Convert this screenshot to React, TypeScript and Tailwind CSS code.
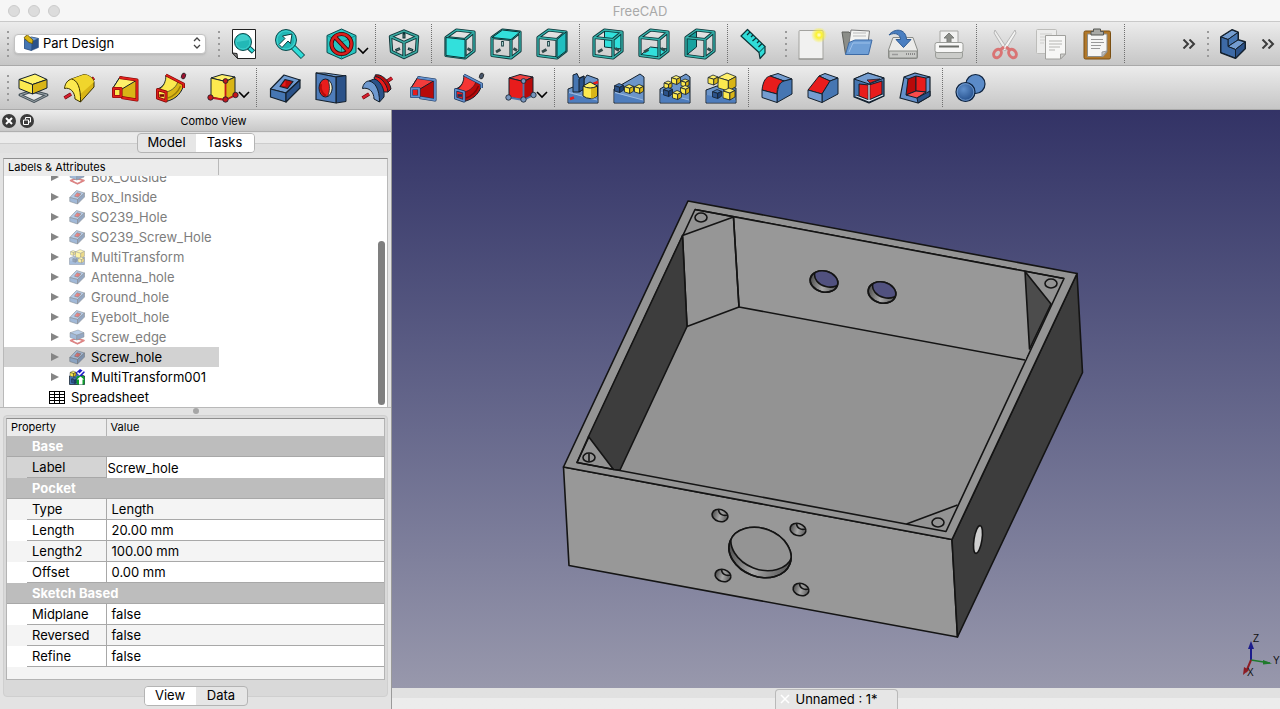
import { useState } from "react";
import type { ReactNode } from "react";

const BLUE = "#4676b2";
const BLUE_LIGHT = "#749dd0";
const BLUE_DARK = "#2b5289";
const YELLOW = "#fce94f";
const YELLOW_MID = "#f0d52c";
const YELLOW_DARK = "#d9b516";
const RED = "#e81c1c";
const RED_DARK = "#b80a0a";
const TEAL = "#2fdcd8";
const INK = "#14202c";

interface IconProps {
  size?: number;
}

function Icon({ size = 32, children }: { size?: number; children: ReactNode }) {
  return (
    <svg width={size} height={size} viewBox="0 0 32 32" fill="none" strokeLinejoin="round" aria-hidden="true">
      {children}
    </svg>
  );
}

// Outlined polygon, used by nearly every solid in the icon set
function Poly({ p, fill, stroke = INK, w = 1 }: { p: string; fill: string; stroke?: string; w?: number }) {
  return <polygon points={p} fill={fill} stroke={stroke} strokeWidth={w} />;
}

function MiniCube({ x, y, s, blue }: { x: number; y: number; s: number; blue?: boolean }) {
  const h = s / 2;
  const top = `${x - s},${y - h} ${x},${y - s} ${x + s},${y - h * 1.2} ${x + h * 0.3},${y - h * 0.3}`;
  const left = `${x - s},${y - h} ${x + h * 0.3},${y - h * 0.3} ${x + h * 0.3},${y + s} ${x - s},${y + h * 1.3}`;
  const right = `${x + h * 0.3},${y - h * 0.3} ${x + s},${y - h * 1.2} ${x + s},${y + h} ${x + h * 0.3},${y + s}`;
  return (
    <g>
      <Poly p={top} fill={blue ? BLUE : "#fff06a"} w={0.8} />
      <Poly p={left} fill={blue ? BLUE_DARK : YELLOW} w={0.8} />
      <Poly p={right} fill={blue ? "#1d4074" : YELLOW_DARK} w={0.8} />
    </g>
  );
}

/* ---- View icons ---- */

function FitAllIcon() {
  return (
    <Icon>
      <path d="M4.5 1.5H27.5V30.5H9.5L4.5 25Z" fill="#fff" stroke="#222" />
      <path d="M4.5 25L9.5 30.5L9 25.5Z" fill="#888" stroke="#222" />
      <path d="M19 18L25.5 24" stroke="#0b4a4c" strokeWidth="5" />
      <path d="M19 18L25 23.5" stroke={TEAL} strokeWidth="3" />
      <circle cx="15" cy="14" r="8.5" fill="#22b8b6" stroke="#0b4a4c" />
      <circle cx="15" cy="14" r="7" stroke="#3fd2cf" strokeWidth="1" />
      <path d="M9 14A6 6 0 0 1 21 12Z" fill="#56dcd9" opacity=".6" />
    </Icon>
  );
}

function FitSelectionIcon() {
  return (
    <Icon>
      <path d="M18 18L29 29" stroke="#0b4a4c" strokeWidth="6" />
      <path d="M18 18L28.5 28.5" stroke={TEAL} strokeWidth="4" />
      <circle cx="12" cy="12" r="10.5" fill="#22b8b6" stroke="#0b4a4c" />
      <circle cx="12" cy="12" r="9" stroke="#3fd2cf" strokeWidth="1.2" />
      <path d="M5 16.5L11 10.5L8.5 8L18 6L16.5 15.5L14 13L8 19.5Z" fill="#fff" stroke="#0b3b3c" />
    </Icon>
  );
}

function DrawStyleIcon() {
  return (
    <Icon>
      <Poly p="15.5,1 30,7.5 30,24.5 15.5,31 1,24.5 1,7.5" fill="#27c5c1" stroke="#0b4a4c" />
      <path d="M15.5 15V30M2 8L15 14M29 8L16 14" stroke="#12908e" />
      <circle cx="15.5" cy="16" r="10" stroke="#3a0505" strokeWidth="4.2" />
      <path d="M9 9L22 23" stroke="#3a0505" strokeWidth="4.4" />
      <circle cx="15.5" cy="16" r="10" stroke="#d8201e" strokeWidth="2.6" />
      <path d="M8.5 8.5L22.5 23.5" stroke="#d8201e" strokeWidth="2.6" />
    </Icon>
  );
}

function IsoIcon() {
  const d = "M16 3L29.5 8.5L28.5 23.5L16 29.5L3.5 23.5L2.5 8.5ZM2.5 8.5L16 14.5L29.5 8.5M16 14.5V29.5";
  return (
    <Icon>
      <path d={d} stroke="#0b3336" strokeWidth="3.4" />
      <path d={d} stroke="#3ba8a0" strokeWidth="1.6" />
      <path d="M16 5V10.5" stroke="#0b3336" strokeWidth="3" />
      <path d="M7.5 22.5L12 20.5M20 20.5L25 22.5" stroke="#0b3336" strokeWidth="2.8" />
      <path d="M16 6.5V9.5M8.5 22L11.5 20.8M21 20.8L24 22" stroke="#52706e" strokeWidth="1.3" />
    </Icon>
  );
}

type CubeFace = "front" | "top" | "right" | "rear" | "bottom" | "left";

const faces: Record<CubeFace, string> = {
  front: "2,9.5 21,11.5 21,30 2,27.5",
  top: "2,9.5 21,11.5 30,4 12.5,2",
  right: "21,11.5 30,4 30,23 21,30",
  rear: "12.5,2 30,4 30,21 12.5,19",
  bottom: "2,27.5 12.5,19 30,21 30,23 21,30",
  left: "2,9.5 12.5,2 12.5,19 2,27.5",
};

function ViewCubeIcon({ face }: { face: CubeFace }) {
  const frame = "M2 9.5L21 11.5L21 30L2 27.5ZM2 9.5L12.5 2L30 4L30 23L21 30M21 11.5L30 4";
  const hidden = face === "rear" || face === "bottom" || face === "left";
  return (
    <Icon>
      {hidden && <Poly p={faces[face]} fill={face === "left" ? "#17a29f" : "#32e0dc"} stroke="#0b3336" />}
      {!hidden && face !== "front" && (
        <g>
          <path d="M12.5 13V18.5" stroke="#0b3336" strokeWidth="2.6" />
          <path d="M12.5 14V17.5" stroke="#a9cfcd" strokeWidth="1" />
        </g>
      )}
      {face !== "front" && face !== "left" && <path d="M6 24L10.5 21.5" stroke="#31494a" strokeWidth="2.8" />}
      {face !== "right" && <path d="M23.5 20.5L27 22.5" stroke="#31494a" strokeWidth="2.8" />}
      <path d={frame} stroke="#0b3336" strokeWidth="3.2" />
      <path d={frame} stroke="#35b3ac" strokeWidth="1.4" />
      {!hidden && <Poly p={faces[face]} fill={face === "right" ? "#20bfc0" : "#32e0dc"} stroke="#0b3336" />}
    </Icon>
  );
}

function RulerIcon() {
  return (
    <Icon>
      <path d="M1 8L7.5 1.5L25 18.5V25L20 30.5L19 24.5Z" fill={TEAL} stroke="#0b3336" strokeWidth="1.2" />
      <path d="M19 24.5L25 18.5" stroke="#0b3336" />
      <path d="M10 4L7 7M13 7L11 9M16 10L12.5 13M19 13L17 15M22 15.5L18.5 19" stroke="#0b3336" strokeWidth="1.2" />
    </Icon>
  );
}

/* ---- File icons ---- */

function NewIcon() {
  return (
    <Icon>
      <defs>
        <radialGradient id="glow">
          <stop offset="0" stopColor="#fffde0" />
          <stop offset=".35" stopColor="#fbf230" />
          <stop offset="1" stopColor="#fbf230" stopOpacity="0" />
        </radialGradient>
      </defs>
      <rect x="4" y="2.5" width="24" height="28.5" rx="1" fill="#f1f1f0" stroke="#a3a39f" />
      <path d="M3.5 31H28.5" stroke="#8d8d89" />
      <circle cx="24" cy="7" r="8" fill="url(#glow)" />
    </Icon>
  );
}

function OpenIcon() {
  return (
    <Icon>
      <path d="M1 4H8L10 6V26H4.5Z" fill="#8b8d88" stroke="#5e605c" />
      <path d="M10 2L28.5 3L26 24L7 22Z" fill="#f4f4f2" stroke="#777" />
      <path d="M12 5H25M12 8H25" stroke="#bbb" />
      <path d="M8 14.5L14 12H31L27.5 26.5H4.5Z" fill="#6f9fd6" stroke="#3d6ba6" />
      <path d="M8 24L12 15H29" stroke="#9cc0ea" />
    </Icon>
  );
}

function SaveIcon() {
  return (
    <Icon>
      <path d="M6 9.5H26L30.5 22V29.5Q30.5 30.5 29.5 30.5H2.5Q1.5 30.5 1.5 29.5V22Z" fill="#ececea" stroke="#8a8c88" />
      <path d="M2 23H30V30H2Z" fill="#c9cac7" stroke="#8a8c88" />
      <path d="M19 26H28" stroke="#888" strokeWidth="2" strokeDasharray="1 1" />
      <path d="M5 26.5H11" stroke="#999" strokeWidth="1.5" />
      <path d="M2 7C7 0 19 0 19.5 11.5H24L16.5 19.5L9 11.5H13.5C13.5 6 8 4 2 7Z" fill="#4a7fc1" stroke="#2d5a93" />
    </Icon>
  );
}

function PrintIcon() {
  return (
    <Icon>
      <path d="M7 3H25V18H7Z" fill="#f2f2f1" stroke="#a6a6a3" />
      <path d="M16 5L21 10H18V15H14V10H11Z" fill="#8b8d88" stroke="#7b7d79" />
      <rect x="2" y="14.5" width="28" height="10" rx="2" fill="#f7f7f6" stroke="#9a9c98" />
      <path d="M6 18.5H26" stroke="#6b6d69" strokeWidth="2" />
      <path d="M2.5 24.5H29.5V28Q29.5 30.5 27 30.5H5Q2.5 30.5 2.5 28Z" fill="#cbccc9" stroke="#9a9c98" />
    </Icon>
  );
}

function CutIcon() {
  return (
    <Icon>
      <path d="M6 2L18.5 21L16 23L5 5Z" fill="#ededec" stroke="#aaa" strokeWidth=".8" />
      <path d="M26 2L13.5 21L16 23L27 5Z" fill="#f5f5f4" stroke="#aaa" strokeWidth=".8" />
      <ellipse cx="8.5" cy="25.5" rx="3.5" ry="4.5" transform="rotate(35 8.5 25.5)" stroke="#d97474" strokeWidth="3" />
      <ellipse cx="23.5" cy="25.5" rx="3.5" ry="4.5" transform="rotate(-35 23.5 25.5)" stroke="#d97474" strokeWidth="3" />
      <path d="M11 22L15 19M21 22L17 19" stroke="#d97474" strokeWidth="3" />
    </Icon>
  );
}

function CopyIcon() {
  return (
    <Icon>
      <rect x="1.5" y="1.5" width="20" height="24" rx="1" fill="#ececeb" stroke="#bdbdba" />
      <path d="M5 6H17M5 9H17M5 12H12M5 15H9" stroke="#cfcfcd" />
      <path d="M10.5 7.5H30.5V26L25.5 31H10.5Z" fill="#f7f7f6" stroke="#a0a09d" />
      <path d="M14 13H27M14 16H27M14 19H25M14 22H20" stroke="#b5b5b2" />
      <path d="M25.5 31V26H30.5Z" fill="#cfcfcd" stroke="#a0a09d" />
    </Icon>
  );
}

function PasteIcon() {
  return (
    <Icon>
      <rect x="3" y="3" width="26.5" height="28" rx="1.5" fill="#b1782a" stroke="#7a4f13" />
      <path d="M6.5 6H26V24L22 28.5H6.5Z" fill="#f6f6f5" stroke="#8c8c88" />
      <path d="M10 11.5H22M10 14.5H23M10 17.5H20M10 20.5H19" stroke="#999" />
      <path d="M21 28.5L26 23L21 24Z" fill="#c5c5c2" stroke="#999" />
      <path d="M10 3.5H12.5V1H19.5V3.5H22.5V7H10Z" fill="#a9aaa6" stroke="#555753" />
    </Icon>
  );
}

function PartIcon() {
  return (
    <Icon>
      <Poly p="4,9 15,2 21,4.5 21,12 28,14 28,20.5 18.5,30 4,24.5" fill={BLUE_DARK} w={2} />
      <Poly p="4,9 15,2 21,4.5 11,11.5" fill={BLUE_LIGHT} />
      <Poly p="11,11.5 21,4.5 21,12 11,18.5" fill={BLUE} />
      <Poly p="11,18.5 21,12 28,14 18.5,21.5" fill={BLUE_LIGHT} />
      <Poly p="4,9 11,11.5 11,18.5 18.5,21.5 18.5,30 4,24.5" fill="#3d6aa6" />
      <Poly p="18.5,21.5 28,14 28,20.5 18.5,30" fill={BLUE_DARK} />
    </Icon>
  );
}

/* ---- Part Design icons ---- */

function PadIcon({ size, blue }: IconProps & { blue?: boolean }) {
  return (
    <Icon size={size}>
      <path d="M3 23L15 19L30 23L17 29.5Z" fill={blue ? "#fff" : "#e4e6e6"} stroke={blue ? "#a40000" : "#46525a"} strokeWidth="3" />
      <path d="M3 23L15 19L30 23L17 29.5Z" stroke={blue ? RED : "#9aa4a8"} strokeWidth="1" />
      <Poly p="2,7.5 18,2 30,7.5 15.5,12.5" fill={blue ? BLUE_LIGHT : "#fff36c"} />
      <Poly p="2,7.5 15.5,12.5 15.5,22 2,16.5" fill={blue ? BLUE : YELLOW} />
      <Poly p="15.5,12.5 30,7.5 30,16 15.5,22" fill={blue ? BLUE_DARK : YELLOW_DARK} />
    </Icon>
  );
}

function RevolutionIcon() {
  return (
    <Icon>
      <path d="M1.5 26L8 22M26 9.5L31 6" stroke="#5c0606" strokeWidth="3.6" />
      <path d="M1.5 26L8 22M26 9.5L31 6" stroke="#d51f2e" strokeWidth="2.5" />
      <path d="M8.5 7L21 2.5C26 3 30 6 31 10V15L17.5 30Z" fill={YELLOW_DARK} stroke="#3b3203" />
      <path d="M8.5 7L21 2.5C26 3 30 6 31 10L17.5 22C16 13 13 9 8.5 7Z" fill={YELLOW_MID} />
      <path d="M1.5 16.5C2 11 5 8 8.5 7C14 8 18 15 17.5 30L12 27C12 20 7 15 1.5 16.5Z" fill={YELLOW} stroke="#3b3203" />
    </Icon>
  );
}

function LoftIcon({ cut }: { cut?: boolean }) {
  const frame = cut ? "#6591cd" : "#e0201c";
  const edge = cut ? "#173459" : "#7a0505";
  return (
    <Icon>
      <Poly p="11,5 28,8 28,28 12,25 4,24 4,16" fill={cut ? RED_DARK : YELLOW_DARK} />
      <Poly p="11,5 28,8 13,17 4,16" fill={cut ? "#f23c3c" : "#fff06a"} />
      <path d="M10.5 5.5L28 8V28L12.5 25.5" stroke={edge} strokeWidth="3" />
      <path d="M10.5 5.5L28 8V28L12.5 25.5" stroke={frame} strokeWidth="1.8" />
      <rect x="4.5" y="16.5" width="7.5" height="8" fill={cut ? RED : YELLOW} stroke={edge} strokeWidth="3" />
      <rect x="4.5" y="16.5" width="7.5" height="8" stroke={frame} strokeWidth="1.8" />
    </Icon>
  );
}

function SweepIcon({ cut }: { cut?: boolean }) {
  const frame = cut ? "#6591cd" : "#e0201c";
  const edge = cut ? "#173459" : "#7a0505";
  return (
    <Icon>
      <path d="M11 3L29 12C27 20 22 27 11 29.5L3 17C9 14 11 10 11 3Z" fill={cut ? RED_DARK : YELLOW_DARK} stroke={INK} />
      <path d="M11 3L23 9C22 14 17 19 11 20L4 18C9 14 11 10 11 3Z" fill={cut ? "#f53434" : YELLOW} stroke={INK} strokeWidth=".6" />
      <path d="M13 26C19 24 23 20 25.500 14" stroke={cut ? "#7c0606" : "#9a7d08"} strokeWidth="1.5" />
      <path d="M11 3L28.5 12V16" stroke={edge} strokeWidth="3" />
      <path d="M11 3L28.5 12V16" stroke={frame} strokeWidth="1.7" />
      <path d="M2.5 17.5L11 20V29L2.5 26Z" fill={cut ? RED : YELLOW} stroke={edge} strokeWidth="3" />
      <path d="M2.5 17.5L11 20V29L2.5 26Z" stroke={frame} strokeWidth="1.7" />
      <path d="M4.5 23.5H9" stroke={edge} strokeWidth="2.6" />
      <ellipse cx="28.5" cy="4" rx="2" ry="3" transform="rotate(20 28.5 4)" fill={cut ? "#46566b" : "#9b1230"} stroke="#222" strokeWidth=".8" />
    </Icon>
  );
}

function PrimitiveIcon({ cut }: { cut?: boolean }) {
  const dot = cut ? "#7795bd" : "#c4161c";
  const line = cut ? "#4e75ab" : "#c4161c";
  return (
    <Icon>
      <Poly p="4,6 15,2.5 28,5 18.5,9.5" fill={cut ? "#f04040" : "#fff06a"} />
      <Poly p="4,6 18.5,9.5 18.5,28 4,25" fill={cut ? RED : YELLOW} />
      <Poly p="18.5,9.5 28,5 28,23 18.5,28" fill={cut ? RED_DARK : YELLOW_DARK} />
      <path d="M18.5 9.5V28M3.5 25.5L18.5 28L29 23" stroke={line} strokeWidth="1.8" />
      <g fill={dot} stroke={INK} strokeWidth=".8">
        <circle cx="18.5" cy="9" r="2.4" />
        <circle cx="3.5" cy="25.5" r="2.7" />
        <circle cx="18.5" cy="27.5" r="2.7" />
        <circle cx="28.5" cy="23" r="2.7" />
      </g>
    </Icon>
  );
}

function PocketIcon({ size }: IconProps) {
  return (
    <Icon size={size}>
      <Poly p="1.5,17 15,3 31,8 17,21" fill="#6f9ad0" w={1.2} />
      <Poly p="1.5,17 17,21 17,30 1.5,25" fill={BLUE} w={1.2} />
      <Poly p="17,21 31,8 31,16 17,30" fill={BLUE_DARK} w={1.2} />
      <Poly p="11,14.5 16,7.5 24,9.5 18.5,16.5" fill={RED_DARK} w={1.2} />
      <path d="M12.5 13.5L16.5 8.5V14Z" fill={RED} />
    </Icon>
  );
}

function HoleIcon() {
  return (
    <Icon>
      <Poly p="1,1 21,5 31,4 10,1" fill={BLUE_LIGHT} />
      <Poly p="21,5 31,3.5 31,29.5 21,31" fill={BLUE_DARK} />
      <Poly p="1,1 21,5 21,31 1,27.5" fill="#4f7dba" w={1.2} />
      <ellipse cx="10.5" cy="16" rx="6.5" ry="9" fill={RED} stroke={INK} />
      <path d="M13 8C19 11 18 22 12.5 24.5C15 20 15 13 13 8Z" fill="#f4ecc8" stroke={INK} strokeWidth=".8" />
      <path d="M6 12C5 17 7 22 11 24" stroke={RED_DARK} strokeWidth="2" />
    </Icon>
  );
}

function GrooveIcon() {
  return (
    <Icon>
      <path d="M1.5 26L8 22M26 9.5L31 6" stroke="#5c0606" strokeWidth="3.6" />
      <path d="M1.5 26L8 22M26 9.5L31 6" stroke="#d51f2e" strokeWidth="2.5" />
      <path d="M14 3C20 1 29 9 30 17L27 20L20 16Z" fill={RED_DARK} stroke={INK} />
      <path d="M13 5C17 3 26 10 27 20L19 20Z" fill={RED} stroke={INK} />
      <path d="M8 9L13 7C19 8 24 17 23 25L18.5 30Z" fill={BLUE_DARK} stroke={INK} />
      <path d="M1.5 16.5C2 12 5 9 8 9C14 10 18.5 17 18.5 30L13 27C13 20 8 15 1.5 16.5Z" fill="#6f9ad0" stroke={INK} />
    </Icon>
  );
}

function Ground({ fold }: { fold?: boolean }) {
  return (
    <g>
      <Poly p={fold ? "1,17 14,12 20,3 31,7 31,31 1,31" : "1,17 27,2 31,5 31,31 1,31"} fill="#6c95ca" />
      <path d="M1.5 21L30.5 28V30.5H1.5Z" fill="#4e7dbd" />
      <path d="M2 20.5L30 28" stroke="#a9c5e8" strokeWidth=".8" />
    </g>
  );
}

function MirroredIcon() {
  return (
    <Icon>
      <Ground fold />
      <path d="M3 27L7 25.5M26 12L31 10" stroke={RED} strokeWidth="2.5" />
      <path d="M6 3L10 1.5L12 6L17 4V17L12 20H6Z" fill={BLUE} stroke={INK} />
      <path d="M12 7L17 4V17L12 20Z" fill={BLUE_DARK} stroke={INK} />
      <path d="M16 14V24Q23 29 30.5 24V14Z" fill={YELLOW} stroke={INK} />
      <path d="M24 15H30V24Q27 26 24 26.5Z" fill={YELLOW_DARK} />
      <path d="M16 14L23 10L30.5 14Q23 18 16 14Z" fill="#fff06a" stroke={INK} />
    </Icon>
  );
}

function LinearPatternIcon() {
  return (
    <Icon>
      <Ground />
      <MiniCube x={6} y={16} s={4.5} blue />
      <MiniCube x={16} y={17} s={4.5} />
      <MiniCube x={26} y={17} s={4.5} />
    </Icon>
  );
}

function PolarPatternIcon() {
  return (
    <Icon>
      <Ground />
      <MiniCube x={17} y={8} s={4.5} />
      <MiniCube x={9} y={13} s={4} />
      <MiniCube x={26} y={11} s={4} />
      <MiniCube x={26} y={18} s={4.5} />
      <MiniCube x={9} y={20} s={4.5} blue />
      <MiniCube x={18} y={23} s={4.5} />
    </Icon>
  );
}

function MultiTransformIcon({ size }: IconProps) {
  return (
    <Icon size={size}>
      <Poly p="1,18 12,14 31,16 31,31 1,31" fill="#6c95ca" />
      <path d="M1.5 23L30.5 28V30.5H1.5Z" fill="#4e7dbd" />
      <MiniCube x={22} y={10} s={9} />
      <MiniCube x={8} y={8} s={5} />
      <MiniCube x={12} y={22} s={4.5} blue />
      <MiniCube x={24} y={22} s={6} />
    </Icon>
  );
}

function FilletIcon() {
  return (
    <Icon>
      <Poly p="9,4 17,1.5 31,7 23,9" fill={BLUE_LIGHT} />
      <path d="M1 18C2 9 5 5 9 4L23 9C18 11 16 15 16 22Z" fill={RED} stroke={INK} />
      <path d="M23 9C18 11 16 15 16 30.5L31 22V7Z" fill={BLUE} stroke={INK} />
      <Poly p="1,18 16,22 16,30.5 1,25.5" fill={BLUE_LIGHT} />
    </Icon>
  );
}

function ChamferIcon() {
  return (
    <Icon>
      <Poly p="12,4 18,1.5 31,6 23,9" fill={BLUE_LIGHT} />
      <Poly p="1,18 12,4 23,9 15,22" fill={RED} />
      <Poly p="15,22 23,9 31,6 31,22 15,30.5" fill={BLUE} />
      <Poly p="1,18 15,22 15,30.5 1,25.5" fill={BLUE_LIGHT} />
    </Icon>
  );
}

function DraftIcon() {
  return (
    <Icon>
      <Poly p="1,7 15,1 31,6 31,24 16,31 1,25" fill={BLUE} w={1.2} />
      <Poly p="1,7 15,1 31,6 16,12" fill={BLUE_LIGHT} />
      <Poly p="6,12 16,13 16,28 6,24" fill={RED} />
      <Poly p="16,13 29,9 29,22 16,28" fill={RED} />
      <Poly p="14,8 27,7 17,11" fill={RED} w={0.8} />
      <path d="M16 13V30M3 24L16 29.5L30 23" stroke={INK} strokeWidth="2.6" />
      <path d="M16 13V29M3 24L16 29L30 23" stroke="#dce6f2" strokeWidth="1.3" />
    </Icon>
  );
}

function ThicknessIcon() {
  return (
    <Icon>
      <Poly p="5,5 16,1 31,5 31,24 19,31 1,26" fill="#6490cb" w={1.2} />
      <Poly p="9,7 17,4 17,19 7,23" fill={RED_DARK} />
      <Poly p="17,4 27,6 27,20 17,19" fill={RED} />
      <Poly p="7,23 17,19 27,20 18,26" fill="#fa4b4b" />
      <Poly p="18,26 31,19 31,24 19,31" fill={BLUE_DARK} />
      <path d="M27 6L31 5M5 5L9 7" stroke={INK} />
    </Icon>
  );
}

function BooleanIcon() {
  return (
    <Icon>
      <defs>
        <radialGradient id="ball" cx=".4" cy=".35" r=".7">
          <stop offset="0" stopColor="#5f8fcb" />
          <stop offset="1" stopColor="#204a86" />
        </radialGradient>
      </defs>
      <circle cx="20.5" cy="12" r="9.5" fill="#5b8bc8" stroke="#0f2440" strokeWidth="1.2" />
      <circle cx="10.5" cy="20" r="9.5" fill="url(#ball)" stroke="#0f2440" strokeWidth="1.2" />
      <circle cx="10.5" cy="20" r="8.3" stroke="#7ba3d6" strokeWidth=".8" />
    </Icon>
  );
}

function WorkbenchIcon() {
  return (
    <Icon size={16}>
      <Poly p="3,9 16,4 31,7 31,25 17,31 3,27" fill={BLUE_DARK} stroke="#2b4d7c" />
      <Poly p="3,9 17,4 31,7 18,13" fill={BLUE_LIGHT} stroke="#2b4d7c" />
      <Poly p="3,9 18,13 17,31 3,27" fill={BLUE} stroke="#2b4d7c" />
      <path d="M4 3L9 0L20 10L19 17L12 15L2 6Z" fill={YELLOW_DARK} stroke="#5a4a04" strokeWidth="1.5" />
    </Icon>
  );
}

function ActiveTransformIcon() {
  return (
    <Icon size={16}>
      <Poly p="1,14 12,8 31,14 31,31 1,31" fill="#4676b5" w={1.5} />
      <MiniCube x={8} y={10} s={6} />
      <MiniCube x={11} y={23} s={6} blue />
      <rect x="15" y="14" width="16" height="17" rx="3" fill="#0ea02c" />
      <path d="M23 15L30 21H27V31H20V21H16Z" fill="#fff" />
      <path d="M22 0L32 6L24 15L13 8Z" fill="#1a1ac8" />
      <path d="M17 7L21 11L29 3" stroke="#fff" strokeWidth="3" />
    </Icon>
  );
}

function SpreadsheetIcon() {
  return (
    <svg width="16" height="14" viewBox="0 0 16 14" fill="none" shapeRendering="crispEdges" aria-hidden="true">
      <path d="M.5 1.5H15.5V13.5H.5ZM0 4.5H16M0 7.5H16M0 10.5H16M5.5 1V14M10.5 1V14" stroke="#000" />
    </svg>
  );
}

/* ---- Toolbar parts ---- */

function Handle() {
  return (
    <div className="flex w-[9px] shrink-0 flex-col items-end justify-center gap-1 pr-px">
      {[0, 1, 2, 3, 4].map((i) => (
        <span key={i} className="size-0.5 bg-[#9a9a9a]" />
      ))}
    </div>
  );
}

function Separator() {
  return (
    <div className="flex w-2.5 shrink-0 py-0.5 pl-1">
      <span className="border-l border-dotted border-[#6f6f6f]" />
    </div>
  );
}

function ToolButton({ label, menu, children }: { label: string; menu?: boolean; children: ReactNode }) {
  return (
    <button
      type="button"
      aria-label={label}
      title={label}
      className={`relative flex shrink-0 items-center justify-center ${menu ? "w-[58px]" : "w-[46px]"}`}
    >
      {children}
      {menu && (
        <svg width="12" height="8" viewBox="0 0 12 8" fill="none" className="absolute right-0.5 bottom-2.5" aria-hidden="true">
          <path d="M1 1L6 6L11 1" stroke="#000" strokeWidth="1.6" />
        </svg>
      )}
    </button>
  );
}

function MoreButton({ label }: { label: string }) {
  return (
    <button type="button" aria-label={label} className="flex w-6 shrink-0 items-center justify-center">
      <svg width="14" height="10" viewBox="0 0 14 10" fill="none" aria-hidden="true">
        <path d="M1.5 .5L6 5L1.5 9.5M7.500 .5L12 5L7.5 9.5" stroke="#3c3c3c" strokeWidth="2" />
      </svg>
    </button>
  );
}

const toolbarClass = "flex h-11 shrink-0 border-b border-[#a9a9a9] bg-linear-to-b from-[#ececec] to-[#c6c6c6] pl-px";

function MainToolbar() {
  return (
    <div className={toolbarClass} role="toolbar" aria-label="Main">
      <Handle />
      <div className="mr-1.5 ml-1 flex h-5 w-48 shrink-0 items-center gap-1 self-center rounded border border-[#c2c2c2] bg-white px-2 pb-0.5 shadow-sm">
        <WorkbenchIcon />
        <select aria-label="Workbench" className="min-w-0 flex-1 appearance-none bg-transparent text-[13px] leading-4 outline-none">
          <option>Part Design</option>
        </select>
        <svg width="8" height="12" viewBox="0 0 8 12" fill="none" aria-hidden="true" className="-mr-1">
          <path d="M1 4L4 1L7 4M1 8L4 11L7 8" stroke="#444" strokeWidth="1.3" />
        </svg>
      </div>
      <Handle />
      <ToolButton label="Fit all"><FitAllIcon /></ToolButton>
      <ToolButton label="Fit selection"><FitSelectionIcon /></ToolButton>
      <ToolButton label="Draw style" menu><DrawStyleIcon /></ToolButton>
      <Separator />
      <ToolButton label="Axonometric"><IsoIcon /></ToolButton>
      <Separator />
      <ToolButton label="Front"><ViewCubeIcon face="front" /></ToolButton>
      <ToolButton label="Top"><ViewCubeIcon face="top" /></ToolButton>
      <ToolButton label="Right"><ViewCubeIcon face="right" /></ToolButton>
      <Separator />
      <ToolButton label="Rear"><ViewCubeIcon face="rear" /></ToolButton>
      <ToolButton label="Bottom"><ViewCubeIcon face="bottom" /></ToolButton>
      <ToolButton label="Left"><ViewCubeIcon face="left" /></ToolButton>
      <Separator />
      <ToolButton label="Measure distance"><RulerIcon /></ToolButton>
      <Handle />
      <ToolButton label="New"><NewIcon /></ToolButton>
      <ToolButton label="Open"><OpenIcon /></ToolButton>
      <ToolButton label="Save"><SaveIcon /></ToolButton>
      <ToolButton label="Print"><PrintIcon /></ToolButton>
      <Separator />
      <ToolButton label="Cut"><CutIcon /></ToolButton>
      <ToolButton label="Copy"><CopyIcon /></ToolButton>
      <ToolButton label="Paste"><PasteIcon /></ToolButton>
      <Separator />
      <div className="ml-auto flex">
        <MoreButton label="More file tools" />
        <Handle />
        <ToolButton label="Part"><PartIcon /></ToolButton>
        <MoreButton label="More part tools" />
      </div>
    </div>
  );
}

function PartDesignToolbar() {
  return (
    <div className={toolbarClass} role="toolbar" aria-label="Part design">
      <Handle />
      <ToolButton label="Pad"><PadIcon /></ToolButton>
      <ToolButton label="Revolution"><RevolutionIcon /></ToolButton>
      <ToolButton label="Additive loft"><LoftIcon /></ToolButton>
      <ToolButton label="Additive pipe"><SweepIcon /></ToolButton>
      <ToolButton label="Additive primitive" menu><PrimitiveIcon /></ToolButton>
      <Separator />
      <ToolButton label="Pocket"><PocketIcon /></ToolButton>
      <ToolButton label="Hole"><HoleIcon /></ToolButton>
      <ToolButton label="Groove"><GrooveIcon /></ToolButton>
      <ToolButton label="Subtractive loft"><LoftIcon cut /></ToolButton>
      <ToolButton label="Subtractive pipe"><SweepIcon cut /></ToolButton>
      <ToolButton label="Subtractive primitive" menu><PrimitiveIcon cut /></ToolButton>
      <Separator />
      <ToolButton label="Mirrored"><MirroredIcon /></ToolButton>
      <ToolButton label="Linear pattern"><LinearPatternIcon /></ToolButton>
      <ToolButton label="Polar pattern"><PolarPatternIcon /></ToolButton>
      <ToolButton label="MultiTransform"><MultiTransformIcon /></ToolButton>
      <Separator />
      <ToolButton label="Fillet"><FilletIcon /></ToolButton>
      <ToolButton label="Chamfer"><ChamferIcon /></ToolButton>
      <ToolButton label="Draft"><DraftIcon /></ToolButton>
      <ToolButton label="Thickness"><ThicknessIcon /></ToolButton>
      <Separator />
      <ToolButton label="Boolean"><BooleanIcon /></ToolButton>
    </div>
  );
}

/* ---- Combo view ---- */

interface TabsProps {
  names: [string, string];
  active: string;
  onChange: (name: string) => void;
  tabClass: string;
}

function SegmentedTabs({ names, active, onChange, tabClass }: TabsProps) {
  return (
    <div role="tablist" className="flex h-5 overflow-hidden rounded border border-[#b4b4b4] bg-[#e6e6e6] text-[13px] leading-4">
      {names.map((name) => (
        <button
          key={name}
          type="button"
          role="tab"
          aria-selected={active === name}
          onClick={() => onChange(name)}
          className={`pb-0.5 ${tabClass} ${active === name ? "bg-white" : ""}`}
        >
          {name}
        </button>
      ))}
    </div>
  );
}

const treeItems = [
  { name: "Box_Outside", icon: "pad", dim: true },
  { name: "Box_Inside", icon: "pocket", dim: true },
  { name: "SO239_Hole", icon: "pocket", dim: true },
  { name: "SO239_Screw_Hole", icon: "pocket", dim: true },
  { name: "MultiTransform", icon: "multi", dim: true },
  { name: "Antenna_hole", icon: "pocket", dim: true },
  { name: "Ground_hole", icon: "pocket", dim: true },
  { name: "Eyebolt_hole", icon: "pocket", dim: true },
  { name: "Screw_edge", icon: "pad", dim: true },
  { name: "Screw_hole", icon: "pocket", dim: true },
  { name: "MultiTransform001", icon: "active", dim: false },
];

const treeIcons: Record<string, ReactNode> = {
  pad: <PadIcon size={16} blue />,
  pocket: <PocketIcon size={16} />,
  multi: <MultiTransformIcon size={16} />,
  active: <ActiveTransformIcon />,
};

function ModelTree() {
  const [selected, setSelected] = useState("Screw_hole");

  return (
    <div className="relative mx-[3px] mt-[5px] flex min-h-0 flex-1 flex-col border border-b-0 border-[#b9b9b9] border-t-[#8e8e8e] bg-white">
      <div className="z-10 flex h-[17px] shrink-0 bg-[#ececec] text-[11px]">
        <span className="h-4 w-[215px] border-r border-[#b9b9b9] pl-1 leading-4">Labels &amp; Attributes</span>
      </div>
      {/* Scrolled to the end of the document */}
      <ul className="flex min-h-0 flex-1 flex-col justify-end overflow-hidden text-[13px] leading-5">
        {treeItems.map((item) => {
          const isSelected = selected === item.name;
          return (
            <li key={item.name} className="h-5 shrink-0">
              <button
                type="button"
                onClick={() => setSelected(item.name)}
                className={`flex h-5 w-[215px] items-center pl-[47px] text-left ${isSelected ? "bg-[#d2d2d2]" : ""}`}
              >
                <svg width="8" height="8" viewBox="0 0 8 8" aria-hidden="true">
                  <path d="M0 0L8 4L0 8Z" fill="#858585" />
                </svg>
                <span className={`mr-1.5 ml-2.5 ${item.dim ? "opacity-50" : ""}`}>{treeIcons[item.icon]}</span>
                <span className={item.dim && !isSelected ? "text-[#7d7d7d]" : "text-black"}>{item.name}</span>
              </button>
            </li>
          );
        })}
        <li className="h-5 shrink-0">
          <button type="button" className="flex h-5 items-center gap-1.5 pl-[45px]">
            <SpreadsheetIcon />
            Spreadsheet
          </button>
        </li>
      </ul>
      <div className="absolute right-0.5 bottom-0.5 h-[66%] w-[7px] rounded-full bg-[#7f7f7f]" />
    </div>
  );
}

const propertyGroups = [
  { title: "Base", rows: [["Label", "Screw_hole"]] },
  {
    title: "Pocket",
    rows: [
      ["Type", "Length"],
      ["Length", "20.00 mm"],
      ["Length2", "100.00 mm"],
      ["Offset", "0.00 mm"],
    ],
  },
  {
    title: "Sketch Based",
    rows: [
      ["Midplane", "false"],
      ["Reversed", "false"],
      ["Refine", "false"],
    ],
  },
];

// Rows alternate over the whole table, so the shade is kept with the row name
const shadedRows = ["Type", "Length2", "Reversed"];

function PropertyTable() {
  const [label, setLabel] = useState("Screw_hole");

  return (
    <div className="mx-[2px] border border-[#b4b4b4] border-t-[#8e8e8e] bg-[#f4f4f4] pb-3">
      <table className="w-full table-fixed border-collapse text-[13px] leading-5">
        <colgroup>
          <col className="w-5" />
          <col className="w-[79px]" />
          <col />
        </colgroup>
        <thead>
          <tr className="h-[17px] bg-[#ececec] text-left text-[11px] leading-4">
            <th colSpan={2} className="border-r border-[#b4b4b4] p-0 pl-1 font-normal">Property</th>
            <th className="p-0 pl-1 font-normal">Value</th>
          </tr>
        </thead>
        {propertyGroups.map((group) => (
          <tbody key={group.title}>
            <tr className="h-[21px] bg-[#bdbdbd] text-left text-white">
              <th colSpan={3} className="border-b border-[#a8a8a8] p-0 pl-[25px] font-bold">{group.title}</th>
            </tr>
            {group.rows.map(([name, value]) => {
              const shade = shadedRows.includes(name) ? "bg-[#f4f4f4]" : "bg-white";
              return (
                <tr key={name} className={`h-[21px] ${name === "Label" ? "bg-[#d4d4d4]" : shade}`}>
                  <td className="p-0" />
                  <td className="border-r border-b border-[#a8a8a8] p-0 pl-[5px]">{name}</td>
                  {name === "Label" ? (
                    <td className="border-b border-white bg-white p-0 pl-px">
                      <input
                        aria-label={name}
                        value={label}
                        onChange={(e) => setLabel(e.target.value)}
                        className="block h-5 w-full bg-white pt-px outline-none"
                      />
                    </td>
                  ) : (
                    <td className="border-b border-[#a8a8a8] p-0 pl-[5px]">{value}</td>
                  )}
                </tr>
              );
            })}
          </tbody>
        ))}
      </table>
    </div>
  );
}

function ComboView() {
  const [tab, setTab] = useState("Tasks");
  const [propertyTab, setPropertyTab] = useState("View");

  return (
    <aside className="flex w-[392px] shrink-0 flex-col border-r border-[#9a9a9a] bg-[#e3e3e3]">
      <header className="flex h-[22px] shrink-0 items-center gap-1 border-b border-[#b0b0b0] bg-linear-to-b from-[#ececec] to-[#c8c8c8] px-0.5 text-[11px] leading-4">
        <button type="button" aria-label="Close" className="flex size-3.5 items-center justify-center rounded-full bg-[#3b3b3b]">
          <svg width="8" height="8" viewBox="0 0 8 8" aria-hidden="true">
            <path d="M1 1L7 7M7 1L1 7" stroke="#fff" strokeWidth="2" />
          </svg>
        </button>
        <button type="button" aria-label="Float" className="flex size-3.5 items-center justify-center rounded-full bg-[#3b3b3b]">
          <svg width="8" height="8" viewBox="0 0 8 8" fill="none" aria-hidden="true">
            <path d="M2.5 2.5V.5H7.5V5H6M.5 3H5.5V7.5H.5Z" stroke="#fff" />
          </svg>
        </button>
        <h2 className="flex-1 pt-px text-center">Combo View</h2>
      </header>
      <div className="mt-px flex h-5 shrink-0 items-center bg-linear-to-b from-[#ebebeb] from-50% to-[#e0e0e0] to-50%">
        <span className="h-px flex-1 bg-[#cdcdcd]" />
        <SegmentedTabs names={["Model", "Tasks"]} active={tab} onChange={setTab} tabClass="w-[58px]" />
        <span className="h-px flex-1 bg-[#cdcdcd]" />
      </div>
      <ModelTree />
      <div className="flex h-2 shrink-0 items-center justify-center border-t border-[#b9b9b9]">
        <span className="size-1.5 rounded-full bg-[#a6a6a6]" />
      </div>
      <section className="mx-[3px] mb-3 shrink-0 rounded-sm border border-[#cfcfcf] bg-[#d9d9d9] pt-[2px]">
        <PropertyTable />
        <div className="-mb-2.5 flex justify-center pt-1.5">
          <SegmentedTabs names={["View", "Data"]} active={propertyTab} onChange={setPropertyTab} tabClass="w-[51px]" />
        </div>
      </section>
    </aside>
  );
}

/* ---- 3D view ---- */

const smallHoles = [
  [720, 515],
  [798, 529],
  [723, 575],
  [801, 589],
];

const cornerHoles = [
  [701, 217],
  [589, 457],
  [1051, 283],
  [938, 522],
];

const wallHoles = [
  [824, 281],
  [882, 292],
];

function EnclosureModel() {
  return (
    <svg
      viewBox="392 110 888 577"
      className="size-full"
      fill="none"
      stroke="#141414"
      strokeWidth="1.6"
      strokeLinejoin="round"
      role="img"
      aria-label="Enclosure model"
    >
      <defs>
        <linearGradient id="bore" x1="0" x2="1" y1="0" y2="0">
          <stop offset="0" stopColor="#4d4d4d" />
          <stop offset=".5" stopColor="#a8a8a8" />
          <stop offset="1" stopColor="#5a5a5a" />
        </linearGradient>
        <clipPath id="flangeClip">
          <ellipse cx="760" cy="552" rx="32" ry="24" transform="rotate(21 760 552)" />
        </clipPath>
        <clipPath id="wallHoleClip">
          <ellipse rx="14" ry="10.5" transform="rotate(14)" />
        </clipPath>
      </defs>

      {/* Outer faces */}
      <path d="M563.5 466.5L952 539L957.5 636.5L569 565Z" fill="#989898" />
      <path d="M952 539L1077 273L1082.5 372L957.5 636.5Z" fill="#3d3d3d" />
      {/* Rim */}
      <path d="M688 200.5L1077 273L952 539L563.5 466.5Z" fill="#949494" />
      <path d="M695 209L1064 278L946 531L577 462Z" fill="#939393" />

      {/* Inner walls */}
      <path d="M733.5 216.5L1025 271L1029.5 348.5L1025 359.5L739 306.5Z" fill="#989898" stroke="none" />
      <path d="M695 209L1064 278" />
      <path d="M682.5 235L733.5 216.5L739 306.5L687 326Z" fill="#969696" />
      <path d="M682.5 235L687 326L620 469.5L613.5 469L588.5 436Z" fill="#3d3d3d" />
      <path d="M1025 271L1051 303.5L1029.5 348.5Z" fill="#4c4c4c" />
      <path d="M739 306.5L1025 359.5M733.5 216.5L739 306.5" />
      {/* Screw corners */}
      <path d="M588.5 436L577 462L613.5 469M906.5 523.5L957.5 504.5" />

      {cornerHoles.map(([x, y]) => (
        <ellipse key={`${x}-${y}`} cx={x} cy={y} rx="6" ry="4.5" />
      ))}
      <path d="M589 453V461" />

      {wallHoles.map(([x, y]) => (
        <g key={x} transform={`translate(${x} ${y})`}>
          <ellipse rx="14" ry="10.5" transform="rotate(14)" fill="url(#bore)" />
          <g clipPath="url(#wallHoleClip)">
            <ellipse cx="3" cy="-6" rx="14" ry="10.5" transform="rotate(14)" fill="#51517f" />
          </g>
          <ellipse rx="14" ry="10.5" transform="rotate(14)" />
        </g>
      ))}

      {/* Connector cutout */}
      <ellipse cx="760" cy="552" rx="32" ry="24" transform="rotate(21 760 552)" fill="url(#bore)" />
      <g clipPath="url(#flangeClip)">
        <ellipse cx="762" cy="545" rx="32" ry="24" transform="rotate(21 762 545)" fill="#949494" />
      </g>
      <ellipse cx="760" cy="552" rx="32" ry="24" transform="rotate(21 760 552)" />
      {smallHoles.map(([x, y]) => (
        <g key={`${x}-${y}`} transform={`translate(${x} ${y}) rotate(16)`}>
          <ellipse rx="8" ry="6" fill="url(#bore)" />
          <path d="M-3 -5.5C-2 -1 3 0 7 -2.5" fill="#969696" />
        </g>
      ))}
      <ellipse cx="978" cy="539" rx="4" ry="14" transform="rotate(9 978 539)" fill="#cfcfcf" />
    </svg>
  );
}

function AxisCross() {
  return (
    <svg width="44" height="48" viewBox="0 0 44 48" fill="none" className="absolute right-0 bottom-2" aria-hidden="true">
      <path d="M15 28V12" stroke="#1c1c8c" strokeWidth="2" />
      <path d="M12 17L15 9L18 17Z" fill="#1c1c8c" />
      <path d="M15 28L34 31" stroke="#1f7a2c" strokeWidth="1.5" />
      <path d="M27 28L36 31.5L27 32.5Z" fill="#1f7a2c" />
      <path d="M15 28L10 40" stroke="#8c1c24" strokeWidth="2" />
      <path d="M8 35L7 43L13 38Z" fill="#8c1c24" />
      <g fill="#111" className="font-['Liberation_Sans'] text-[10px]">
        <text x="17" y="10">Z</text>
        <text x="37" y="32">Y</text>
        <text x="11" y="44">X</text>
      </g>
    </svg>
  );
}

function Viewer() {
  return (
    <main className="flex min-w-0 flex-1 flex-col">
      <div className="relative min-h-0 flex-1 bg-linear-to-b from-[#333366] to-[#9898ac]">
        <EnclosureModel />
        <AxisCross />
      </div>
      <div className="flex h-[21px] shrink-0 justify-center bg-linear-to-b from-[#e1e1e1] from-50% to-[#ececec] to-50% pt-px">
        <div className="flex w-[123px] items-center gap-1.5 rounded-t border border-b-0 border-[#b9b9b9] bg-[#e6e6e6] pb-0.5 pl-1">
          <button type="button" aria-label="Close document">
            <svg width="10" height="10" viewBox="0 0 10 10" aria-hidden="true">
              <path d="M1 1L9 9M9 1L1 9" stroke="#fff" strokeWidth="1.5" />
            </svg>
          </button>
          <span className="text-[13px] leading-4">Unnamed : 1*</span>
        </div>
      </div>
    </main>
  );
}

export default function App() {
  return (
    <div className="flex h-screen flex-col overflow-hidden bg-[#e3e3e3] font-['Inter','Liberation_Sans',sans-serif] text-black">
      <header className="flex h-[22px] shrink-0 items-center border-b border-[#c9c9c9] bg-[#f6f6f6] px-2">
        <div className="flex flex-1 gap-2">
          <span className="size-3 rounded-full border border-[#cccccc] bg-[#dcdcdc]" />
          <span className="size-3 rounded-full border border-[#cccccc] bg-[#dcdcdc]" />
          <span className="size-3 rounded-full border border-[#cccccc] bg-[#dcdcdc]" />
        </div>
        <h1 className="text-[13px] leading-4 text-[#a9a9a9]">FreeCAD</h1>
        <div className="flex-1" />
      </header>
      <MainToolbar />
      <PartDesignToolbar />
      <div className="flex min-h-0 flex-1">
        <ComboView />
        <Viewer />
      </div>
    </div>
  );
}
